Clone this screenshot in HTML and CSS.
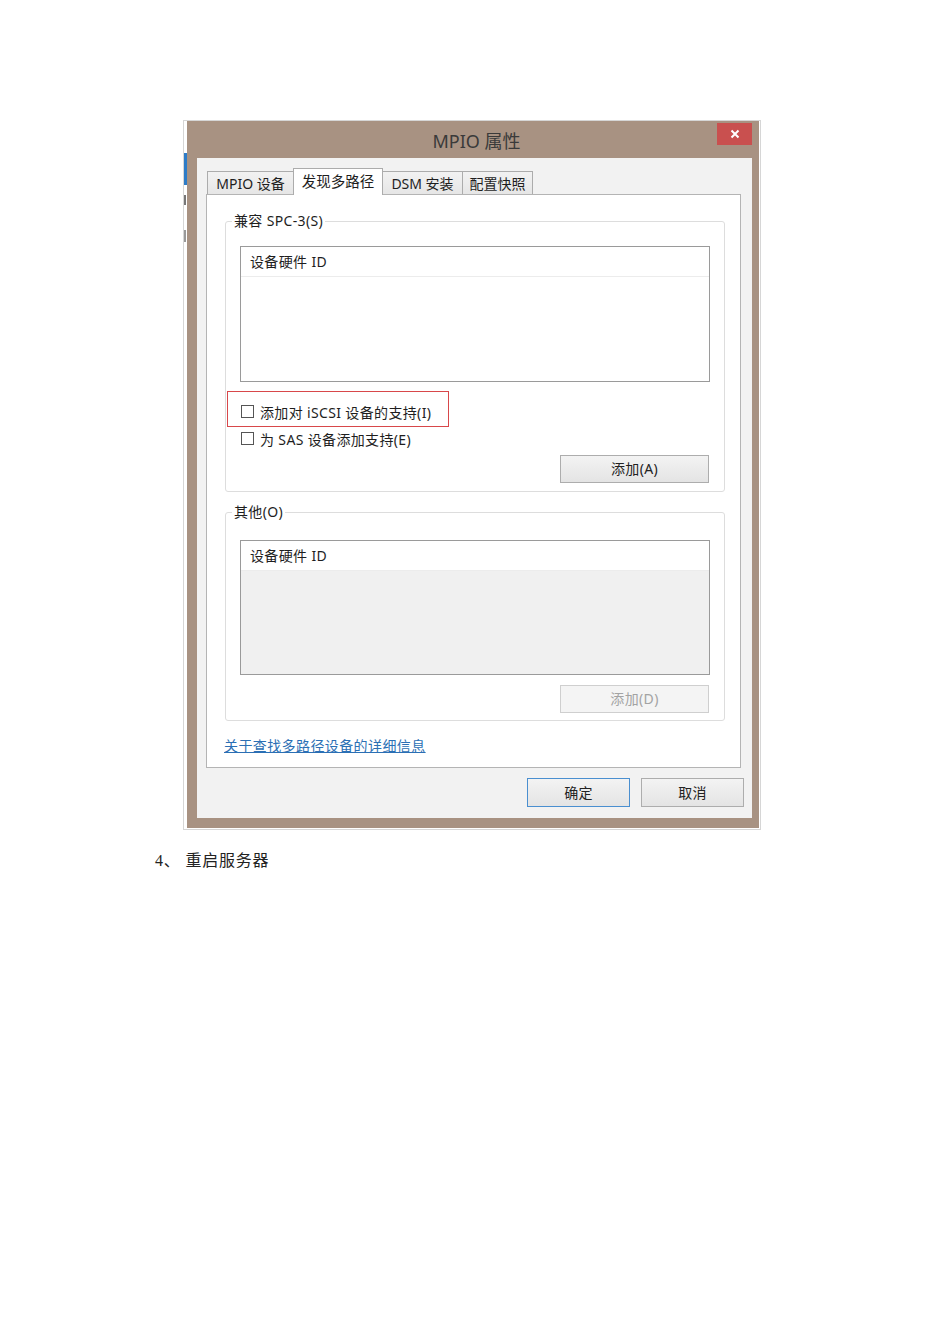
FILE: index.html
```html
<!DOCTYPE html>
<html lang="zh-CN">
<head>
<meta charset="UTF-8" />
<title>MPIO 属性</title>
<link rel="stylesheet" href="styles.css">
</head>
<body>
  <div class="doc">
    <div class="shot">
      <div class="desk">
        <span class="desk-blue"></span>
        <span class="desk-mark"></span>
        <span class="desk-mark desk-mark-2"></span>
      </div>
      <div class="window">
        <div class="titlebar">
          <span></span>
          <span class="title">MPIO 属性</span>
          <span class="close">
            <svg width="10" height="10" viewBox="0 0 10 10"><path d="M1.5 1.5 L8.5 8.5 M8.5 1.5 L1.5 8.5" stroke="#fff" stroke-width="2" fill="none"/></svg>
          </span>
        </div>
        <div class="client">
          <div class="tabs">
            <div class="tab tab-1">MPIO 设备</div>
            <div class="tab tab-2 active">发现多路径</div>
            <div class="tab tab-3">DSM 安装</div>
            <div class="tab tab-4">配置快照</div>
          </div>
          <div class="panel">
            <fieldset class="group group-spc">
              <legend>兼容 SPC-3(S)</legend>
              <div class="list">
                <div class="list-head">设备硬件 ID</div>
              </div>
              <div class="check first">
                <span class="box"></span><span>添加对 iSCSI 设备的支持(I)</span>
                <span class="mark"></span>
              </div>
              <div class="check">
                <span class="box"></span><span>为 SAS 设备添加支持(E)</span>
              </div>
              <div class="btn btn-add">添加(A)</div>
            </fieldset>
            <fieldset class="group group-other">
              <legend>其他(O)</legend>
              <div class="list list-gray">
                <div class="list-head">设备硬件 ID</div>
              </div>
              <div class="btn btn-add disabled">添加(D)</div>
            </fieldset>
            <a class="link" href="#">关于查找多路径设备的详细信息</a>
          </div>
          <div class="actions">
            <div class="btn btn-ok">确定</div>
            <div class="btn">取消</div>
          </div>
        </div>
      </div>
    </div>
    <p class="step">4、 重启服务器</p>
  </div>
</body>
</html>
```

FILE: styles.css
```css
body {
  margin: 0;
  background: #fff;
  font-family: "Noto Sans", "Noto Sans CJK SC", sans-serif;
  color: #1e1e1e;
}
.doc {
  padding: 120px 0 0 183px;
}
.shot {
  width: 578px;
  height: 710px;
  box-sizing: border-box;
  border: 1px solid #d6d6d6;
  display: flex;
  padding: 0 1px 1px 0;
  background: #fff;
}
.desk {
  width: 3px;
  display: flex;
  flex-direction: column;
}
.desk-blue {
  margin-top: 32px;
  height: 32px;
  background: #2d7cc8;
}
.desk-mark {
  margin-top: 10px;
  height: 10px;
  width: 2px;
  background: #777;
}
.desk-mark-2 {
  margin-top: 25px;
  height: 12px;
  background: #999;
}
.window {
  width: 572px;
  box-sizing: border-box;
  background: #a89282;
  padding: 0 7px 10px 10px;
  display: flex;
  flex-direction: column;
}
.titlebar {
  height: 37px;
  display: grid;
  grid-template-columns: 1fr auto 1fr;
  align-items: center;
}
.title {
  font-size: 18px;
  color: #3a3a3a;
  padding-left: 4px;
}
.close {
  justify-self: end;
  align-self: start;
  margin-top: 2px;
  width: 35px;
  height: 22px;
  background: #c9504f;
  display: flex;
  align-items: center;
  justify-content: center;
}
.client {
  flex: 1;
  background: #f2f2f2;
  padding: 10px 11px 11px 9px;
  display: flex;
  flex-direction: column;
  letter-spacing: 0.35px;
}
.tabs {
  height: 26px;
  display: flex;
  align-items: flex-end;
  padding-left: 1px;
  position: relative;
  z-index: 1;
}
.tab {
  height: 23px;
  box-sizing: border-box;
  border: 1px solid #acacac;
  border-bottom: none;
  background: linear-gradient(#f2f2f2, #e6e6e6);
  font-size: 14px;
  line-height: 23px;
  letter-spacing: 0;
  text-align: center;
  margin-right: -1px;
}
.tab-1 { width: 87px; }
.tab-2 { width: 90px; }
.tab-3 { width: 81px; }
.tab-4 { width: 71px; }
.tab.active {
  height: 27px;
  margin-bottom: -1px;
  background: #fff;
  line-height: 24px;
  font-size: 14.5px;
}
.panel {
  height: 574px;
  box-sizing: border-box;
  border: 1px solid #b4b4b4;
  background: #fff;
  padding: 16px 15px 0 18px;
  display: flex;
  flex-direction: column;
}
.group {
  margin: 0;
  border: 1px solid #dddddd;
  border-radius: 3px;
  padding: 15px 14px 8px 14px;
  display: flex;
  flex-direction: column;
  min-width: 0;
}
.group legend {
  margin-left: -8px;
  padding: 0 2px;
  font-size: 14px;
  line-height: 20px;
  color: #1e1e1e;
}
.group-other {
  margin-top: 10px;
  padding-top: 18px;
  padding-bottom: 7px;
}
.list {
  height: 136px;
  box-sizing: border-box;
  border: 1px solid #9a9a9a;
  background: #fff;
}
.list-gray {
  height: 135px;
  background: #f0f0f0;
}
.list-head {
  height: 29px;
  line-height: 29px;
  padding-left: 9px;
  background: #fff;
  border-bottom: 1px solid #ececec;
  font-size: 14px;
}
.check {
  height: 27px;
  display: flex;
  align-items: center;
  font-size: 14px;
  padding-left: 1px;
  position: relative;
}
.check.first {
  margin-top: 16px;
}
.box {
  width: 13px;
  height: 13px;
  box-sizing: border-box;
  border: 1px solid #555;
  background: #fff;
  margin-right: 6px;
}
/* red frame drawn over the iSCSI option */
.mark {
  position: absolute;
  left: -13px;
  top: -7px;
  width: 222px;
  height: 36px;
  box-sizing: border-box;
  border: 1px solid #d8474a;
}
.btn {
  width: 103px;
  height: 29px;
  box-sizing: border-box;
  border: 1px solid #adadad;
  background: linear-gradient(#f3f3f3, #e4e4e4);
  font-size: 14px;
  line-height: 27px;
  text-align: center;
  color: #222;
}
.btn-add {
  align-self: flex-end;
  width: 149px;
  height: 28px;
  line-height: 26px;
  margin-top: 3px;
  margin-right: 1px;
}
.btn-add.disabled {
  margin-top: 10px;
  border-color: #cfcfcf;
  background: #f4f4f4;
  color: #a3a3a3;
}
.btn-ok {
  border-color: #4a8fd0;
}
.link {
  margin-top: 15px;
  margin-left: -1px;
  align-self: flex-start;
  font-size: 14px;
  line-height: 20px;
  letter-spacing: 0.4px;
  color: #2b6fb4;
  text-decoration: underline;
}
.actions {
  margin-top: 10px;
  margin-right: -3px;
  display: flex;
  justify-content: flex-end;
  gap: 11px;
}
.step {
  margin: 19px 0 0 -28px;
  font-family: "Liberation Serif", "Noto Sans CJK SC", serif;
  font-size: 16px;
  line-height: 24px;
  letter-spacing: 0.8px;
  color: #222;
}
```
